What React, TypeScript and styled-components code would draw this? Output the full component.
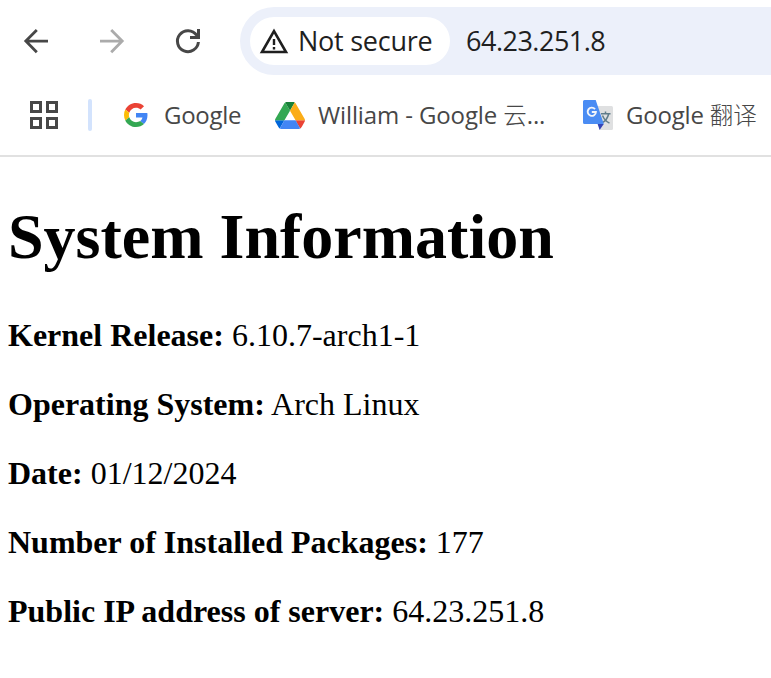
import React from 'react';
import styled, { createGlobalStyle } from 'styled-components';

const GlobalStyle = createGlobalStyle`
  * { box-sizing: border-box; }
  body { margin: 0; background: #fff; overflow: hidden; }
`;

const Window = styled.div`
  width: 100%;
  height: 678px;
  overflow: hidden;
  background: #fff;
`;

const Toolbar = styled.header`
  display: flex;
  height: 75px;
  padding-top: 7px;
`;

const NavButtons = styled.nav`
  display: flex;
  flex: none;
  align-items: center;
  gap: 40px;
  width: 240px;
  padding-left: 18px;
`;

const IconButton = styled.button<{ $muted?: boolean }>`
  display: flex;
  width: 36px;
  height: 36px;
  padding: 0;
  border: 0;
  background: none;
  color: ${(p) => (p.$muted ? '#ababab' : '#474747')};
`;

const AddressBar = styled.div`
  display: flex;
  flex: 1;
  align-items: center;
  height: 68px;
  padding-left: 10px;
  border-radius: 34px 0 0 34px;
  background: #ecf0fa;
`;

const SecurityChip = styled.div`
  display: flex;
  align-items: center;
  gap: 9px;
  flex: none;
  width: 200px;
  height: 48px;
  padding-left: 9px;
  border-radius: 24px;
  background: #fff;
`;

const UiText = styled.span<{ $size: number; $spacing: number; $color: string }>`
  font-family: 'Open Sans', 'Noto Sans CJK SC', sans-serif;
  font-size: ${(p) => p.$size}px;
  letter-spacing: ${(p) => p.$spacing}px;
  color: ${(p) => p.$color};
  line-height: 36px;
  white-space: nowrap;
`;

const Address = styled.div`
  margin-left: 16px;
`;

const BookmarksBar = styled.div`
  display: flex;
  align-items: center;
  height: 82px;
  padding-left: 30px;
  border-bottom: 2px solid #e1e1e1;
`;

const Apps = styled.div`
  display: grid;
  grid-template-columns: 12px 12px;
  gap: 4px;
`;

const AppTile = styled.span`
  height: 12px;
  border: 3px solid #474747;
`;

const Separator = styled.div`
  width: 4px;
  height: 32px;
  margin: 0 32px 0 30px;
  border-radius: 2px;
  background: #d3e3fd;
`;

const Bookmark = styled.a<{ $width: number; $gap: number }>`
  display: flex;
  flex: none;
  align-items: center;
  gap: ${(p) => p.$gap}px;
  width: ${(p) => p.$width}px;
`;

const CjkText = styled.span`
  font-family: 'Noto Sans CJK SC', sans-serif;
  font-size: 23.5px;
  font-weight: 300;
  letter-spacing: 0;
  line-height: 0;
`;

const Page = styled.main`
  padding: 0 8px;
  color: #000;
  font-family: 'Liberation Serif', 'Times New Roman', serif;
  font-size: 32px;
  line-height: 37px;
`;

const Title = styled.h1`
  margin: 42px 0 43px;
  font-size: 64px;
  line-height: 75px;
`;

const Fact = styled.p`
  margin: 0 0 32px;
`;

const BackIcon = () => (
  <svg width="36" height="36" viewBox="0 0 36 36" fill="none" stroke="currentColor" strokeWidth="2.8">
    <path d="M30 18.2H8M18.8 7 7.8 18.1 18.8 29.2" />
  </svg>
);

const ForwardIcon = () => (
  <svg width="36" height="36" viewBox="0 0 36 36" fill="none" stroke="currentColor" strokeWidth="2.8">
    <path d="M6 18.2h22M17.2 7l11 11.1-11 11.1" />
  </svg>
);

const ReloadIcon = () => (
  <svg width="36" height="36" viewBox="0 0 36 36">
    <path d="M28.4 19A10.500 10.500 0 1 1 26.600 12.200" fill="none" stroke="currentColor" strokeWidth="3" />
    <path d="M27 6h3v10H20v-3h5l2-2z" fill="currentColor" />
  </svg>
);

const WarningIcon = () => (
  <svg width="30" height="26" viewBox="0 0 30 26">
    <path d="M15 3.2 27 24H3z" fill="none" stroke="#1f1f1f" strokeWidth="2.6" />
    <path d="M13.8 11h2.4v6h-2.4zM13.8 19h2.4v2.4h-2.4z" fill="#1f1f1f" />
  </svg>
);

const GoogleIcon = () => (
  <svg width="24" height="24" viewBox="0 0 48 48">
    <path fill="#EA4335" d="M24 9.5c3.54 0 6.71 1.22 9.21 3.6l6.85-6.85C35.9 2.38 30.47 0 24 0 14.62 0 6.51 5.38 2.56 13.22l7.98 6.19C12.43 13.72 17.74 9.5 24 9.5z" />
    <path fill="#4285F4" d="M46.98 24.55c0-1.57-.15-3.09-.38-4.55H24v9.02h12.94c-.58 2.96-2.26 5.48-4.78 7.18l7.73 6c4.51-4.18 7.09-10.36 7.09-17.65z" />
    <path fill="#FBBC05" d="M10.53 28.59c-.48-1.45-.76-2.99-.76-4.59s.27-3.14.76-4.59l-7.98-6.19C.92 16.46 0 20.12 0 24c0 3.88.92 7.54 2.56 10.78l7.97-6.19z" />
    <path fill="#34A853" d="M24 48c6.48 0 11.93-2.13 15.89-5.81l-7.73-6c-2.15 1.45-4.92 2.3-8.16 2.3-6.26 0-11.57-4.22-13.47-9.91l-7.98 6.19C6.51 42.62 14.62 48 24 48z" />
  </svg>
);

const DriveIcon = () => (
  <svg width="30" height="27" viewBox="0 0 87.3 78">
    <path fill="#0066da" d="m6.6 66.85 3.85 6.65c.8 1.4 1.95 2.5 3.3 3.3l13.75-23.8h-27.5c0 1.55.4 3.1 1.2 4.5z" />
    <path fill="#34a853" d="m43.65 25-13.75-23.8c-1.35.8-2.5 1.9-3.3 3.3l-25.4 44a9.06 9.06 0 0 0 -1.2 4.5h27.5z" />
    <path fill="#ea4335" d="m73.55 76.8c1.35-.8 2.5-1.9 3.3-3.3l1.6-2.75 7.65-13.25c.8-1.4 1.2-2.95 1.2-4.5h-27.5l5.85 11.5z" />
    <path fill="#188038" d="m43.65 25 13.75-23.8c-1.35-.8-2.9-1.2-4.5-1.2h-18.5c-1.6 0-3.15.45-4.5 1.2z" />
    <path fill="#4285f4" d="m59.8 53h-32.3l-13.75 23.8c1.35.8 2.9 1.2 4.5 1.2h50.8c1.6 0 3.15-.45 4.5-1.2z" />
    <path fill="#fbad18" d="m73.4 26.5-12.7-22c-.8-1.4-1.95-2.5-3.3-3.3l-13.75 23.8 16.15 28h27.45c0-1.55-.4-3.1-1.2-4.5z" />
  </svg>
);

const TranslateIcon = () => (
  <svg width="30" height="30" viewBox="0 0 30 30">
    <path d="M11 6h17.5A1.5 1.5 0 0 1 30 7.5v21a1.5 1.5 0 0 1-1.5 1.5H17z" fill="#dfe0e1" />
    <path d="M18 13.7h9.5M22.5 11.5v2M25.6 14c-.8 4-3.5 7.3-7 9.2M19.5 15.5c1.3 3.3 4 6.200 7 7.700" fill="none" stroke="#607d8b" strokeWidth="1.5" />
    <path d="M14.6 24h6.2L16.6 30z" fill="#3544b5" />
    <path d="M1.5 0h11.2l8.1 24H1.5A1.500 1.500 0 0 1 0 22.500v-21A1.500 1.500 0 0 1 1.500 0z" fill="#4a8cf3" />
    <path d="M12 9.200A4.100 4.100 0 1 0 12.900 12H8.800" fill="none" stroke="#f2f5fa" strokeWidth="1.9" />
  </svg>
);

const facts = [
  { label: 'Kernel Release:', value: '6.10.7-arch1-1' },
  { label: 'Operating System:', value: 'Arch Linux' },
  { label: 'Date:', value: '01/12/2024' },
  { label: 'Number of Installed Packages:', value: '177' },
  { label: 'Public IP address of server:', value: '64.23.251.8' },
];

export default function App() {
  return (
    <Window>
      <GlobalStyle />
      <Toolbar>
        <NavButtons>
          <IconButton aria-label="Back"><BackIcon /></IconButton>
          <IconButton aria-label="Forward" $muted><ForwardIcon /></IconButton>
          <IconButton aria-label="Reload"><ReloadIcon /></IconButton>
        </NavButtons>
        <AddressBar>
          <SecurityChip>
            <WarningIcon />
            <UiText $size={27} $spacing={-0.25} $color="#1f1f1f">Not secure</UiText>
          </SecurityChip>
          <Address>
            <UiText $size={27} $spacing={-0.5} $color="#1f1f1f">64.23.251.8</UiText>
          </Address>
        </AddressBar>
      </Toolbar>
      <BookmarksBar>
        <Apps><AppTile /><AppTile /><AppTile /><AppTile /></Apps>
        <Separator />
        <Bookmark $width={151} $gap={16}>
          <GoogleIcon />
          <UiText $size={24} $spacing={-0.3} $color="#474747">Google</UiText>
        </Bookmark>
        <Bookmark $width={308} $gap={13}>
          <DriveIcon />
          <UiText $size={24} $spacing={-0.12} $color="#474747">William - Google <CjkText>云</CjkText>...</UiText>
        </Bookmark>
        <Bookmark $width={180} $gap={13}>
          <TranslateIcon />
          <UiText $size={24} $spacing={-0.2} $color="#474747">Google <CjkText>翻译</CjkText></UiText>
        </Bookmark>
      </BookmarksBar>
      <Page>
        <Title>System Information</Title>
        {facts.map((fact) => (
          <Fact key={fact.label}>
            <strong>{fact.label}</strong> {fact.value}
          </Fact>
        ))}
      </Page>
    </Window>
  );
}
